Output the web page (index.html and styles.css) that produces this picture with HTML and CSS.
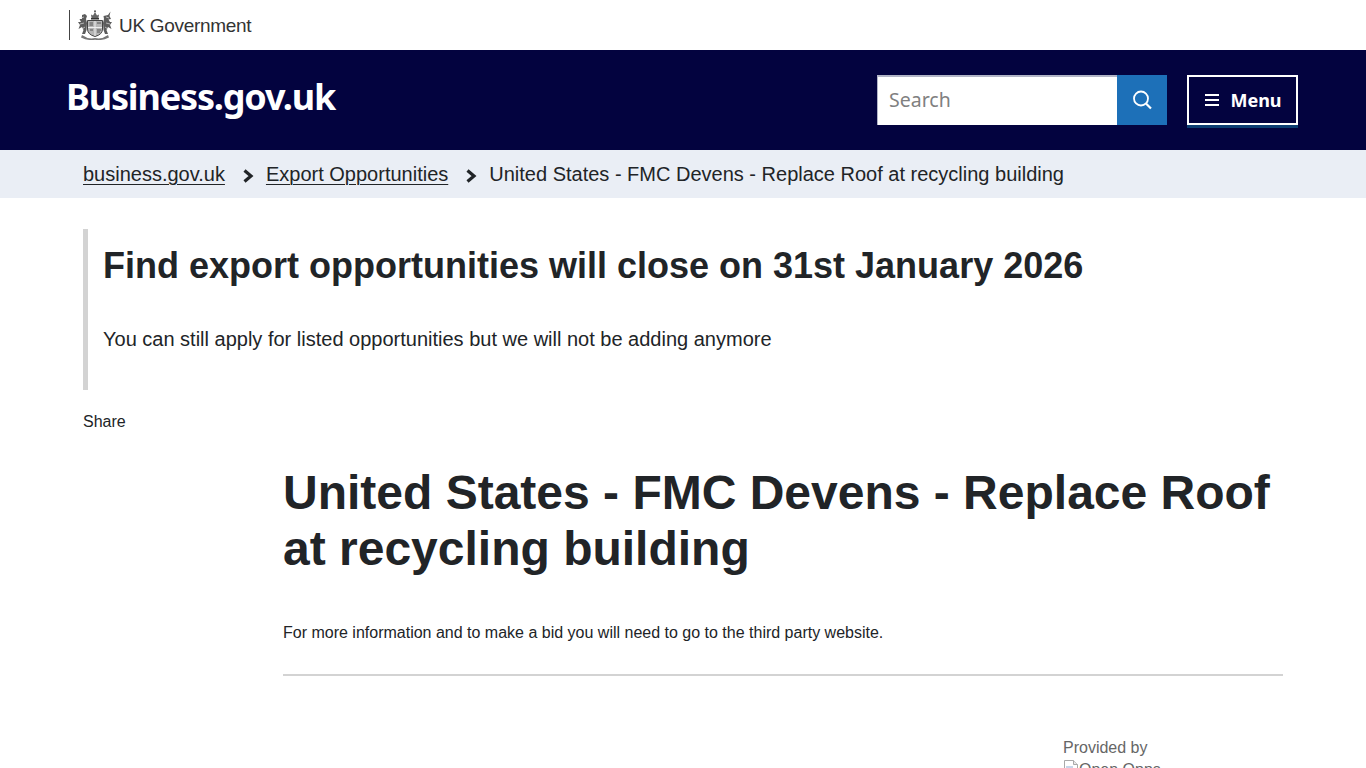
FILE: index.html
```html
<!DOCTYPE html>
<html lang="en">
<head>
    <meta charset="UTF-8">
    <meta name="viewport" content="width=device-width, initial-scale=1.0">
    <title>United States - FMC Devens - Replace Roof at recycling building</title>
    <link rel="stylesheet" href="styles.css">
</head>
<body>
    <div class="gov-bar">
        <div class="gov-logo">
            <svg class="crest" width="36" height="30" viewBox="0 0 36 30" aria-hidden="true">
                <!-- crown -->
                <path d="M14.5 8 L14 4.5 L16 5.5 L18 2 L20 5.5 L22 4.5 L21.5 8 Z" fill="#666"/>
                <circle cx="18" cy="1.2" r="1" fill="#555"/>
                <rect x="14" y="8" width="8" height="1.5" fill="#333"/>
                <!-- shield -->
                <path d="M10.5 10.5 H25.5 V19 Q25.5 24.5 18 26.5 Q10.5 24.5 10.5 19 Z" fill="#b5b5b5" stroke="#444" stroke-width="1"/>
                <path d="M18 11 V26 M11 17.5 H25" stroke="#eee" stroke-width="1"/>
                <path d="M12.5 13 H16 M20 13 H24 M12.5 15 H16 M20 20 H24 M13 20 H16 M20 22 H23" stroke="#555" stroke-width="1"/>
                <!-- lion -->
                <path d="M5 5 L8 4 L10 6 L9 9 L10 13 L9.5 20 L8 24 L5 24 L6.5 20 L5 17 L1.5 19 L3 15 L1 12 L4 12 L2.5 9 L5 9 Z" fill="#5c5c5c"/>
                <path d="M4 8 L7 7 M3 14 L7 13 M5 19 L8 17" stroke="#ddd" stroke-width=".7"/>
                <!-- unicorn -->
                <path d="M31 5 L33.5 1.5 L32.5 6 L34 9 L31.5 9.5 L33 12 L35 12 L33 15 L34.5 19 L31 17 L29.5 20 L31 24 L28 24 L26.5 20 L26 13 L27 9 L26.5 6 Z" fill="#5c5c5c"/>
                <path d="M32 8 L29 7 M33 14 L29 13 M31 19 L28 17" stroke="#ddd" stroke-width=".7"/>
                <!-- motto -->
                <path d="M5 25 Q11 29.5 18 28 Q25 29.5 31 25 L32 27.5 Q25 31 18 29.8 Q11 31 4 27.5 Z" fill="#777"/>
            </svg>
            <span class="gov-name">UK Government</span>
        </div>
    </div>

    <header class="site-header">
        <div class="site-header-inner">
            <a class="site-name" href="#">Business.gov.uk</a>
            <div class="header-actions">
                <form class="search">
                    <input type="text" placeholder="Search" aria-label="Search">
                    <button type="button" class="search-button" aria-label="Search">
                        <svg width="22" height="22" viewBox="0 0 22 22" fill="none" stroke="#fff" aria-hidden="true">
                            <circle cx="10" cy="9.5" r="7" stroke-width="1.8"/>
                            <path d="M15 14.5 L20 19.5" stroke-width="2.2"/>
                        </svg>
                    </button>
                </form>
                <button type="button" class="menu-button">
                    <svg width="14" height="12" viewBox="0 0 14 12" fill="none" stroke="#fff" stroke-width="1.8" aria-hidden="true">
                        <path d="M0 1 H14 M0 6 H14 M0 11 H14"/>
                    </svg>
                    Menu
                </button>
            </div>
        </div>
    </header>

    <nav class="breadcrumbs">
        <div class="container breadcrumbs-inner">
            <a href="#">business.gov.uk</a>
            <svg class="chevron" width="11" height="14" viewBox="0 0 11 14" fill="none" stroke="#212427" stroke-width="3.2" aria-hidden="true"><path d="M1.5 1.5 L8 7 L1.5 12.5"/></svg>
            <a href="#">Export Opportunities</a>
            <svg class="chevron" width="11" height="14" viewBox="0 0 11 14" fill="none" stroke="#212427" stroke-width="3.2" aria-hidden="true"><path d="M1.5 1.5 L8 7 L1.5 12.5"/></svg>
            <span>United States - FMC Devens - Replace Roof at recycling building</span>
        </div>
    </nav>

    <main class="container">
        <div class="notice">
            <h2>Find export opportunities will close on 31st January 2026</h2>
            <p>You can still apply for listed opportunities but we will not be adding anymore</p>
        </div>

        <p class="share">Share</p>

        <div class="opportunity">
            <h1>United States - FMC Devens - Replace Roof at recycling building</h1>
            <p class="intro">For more information and to make a bid you will need to go to the third party website.</p>
            <hr>
            <div class="provider">
                <div class="provider-box">
                    <p>Provided by</p>
                    <div class="broken-img">
                        <svg width="16" height="16" viewBox="0 0 16 16" aria-hidden="true">
                            <path d="M1.5 .5 H10.5 L14.5 4.5 V15.5 H1.5 Z" fill="#fff" stroke="#a9a9a9"/>
                            <path d="M10.5 .5 V4.5 H14.5" fill="#e8e8e8" stroke="#a9a9a9"/>
                            <rect x="3" y="6" width="7" height="6" fill="#c7d6ea"/>
                        </svg>
                        <span>Open Opps</span>
                    </div>
                </div>
            </div>
        </div>
    </main>
</body>
</html>
```

FILE: styles.css
```css
body {
    font-family: "Liberation Sans", Arial, sans-serif;
    margin: 0;
    padding: 0;
    background-color: #fff;
    color: #212427;
}

a {
    color: inherit;
}

.container {
    width: 1200px;
    margin: 0 auto;
}

.gov-bar {
    height: 50px;
    width: 1230px;
    margin: 0 auto;
    display: flex;
    align-items: center;
}

.gov-logo {
    display: flex;
    align-items: center;
    height: 30px;
    margin-left: 1px;
    padding-left: 7px;
    border-left: 1px solid #444;
}

.crest {
    margin-right: 6px;
}

.gov-name {
    font-size: 19px;
    letter-spacing: -0.3px;
    padding-top: 2px;
    color: #333;
}

.site-header {
    height: 100px;
    background-color: #03033f;
}

.site-header-inner {
    width: 1231px;
    height: 100%;
    margin-left: 67px;
    display: flex;
    align-items: center;
    justify-content: space-between;
}

.site-name {
    font-family: "Noto Sans", sans-serif;
    font-size: 36px;
    font-weight: 700;
    letter-spacing: -1.18px;
    margin-left: -1px;
    padding-bottom: 8px;
    color: #fff;
    text-decoration: none;
}

.header-actions {
    display: flex;
    align-items: center;
    gap: 20px;
}

.search {
    display: flex;
    height: 50px;
}

.search input {
    width: 240px;
    box-sizing: border-box;
    border: 0;
    border-top: 2px solid #b1b4c6;
    border-left: 1px solid #b1b4c6;
    padding: 0 11px 3px;
    font-family: "Noto Sans", sans-serif;
    font-size: 19.5px;
    background: #fff;
}

.search input::placeholder {
    color: #808080;
}

.search-button {
    width: 50px;
    border: 0;
    padding: 0;
    background-color: #1d70b8;
    display: flex;
    align-items: center;
    justify-content: center;
}

.menu-button {
    width: 111px;
    height: 50px;
    box-sizing: border-box;
    border: 2px solid #fff;
    box-shadow: 0 3px 0 #0b3d72;
    padding: 0 0 0 2px;
    background-color: #03033f;
    color: #fff;
    font-family: "Noto Sans", sans-serif;
    font-size: 18px;
    font-weight: 700;
    display: flex;
    align-items: center;
    justify-content: center;
    gap: 11px;
}

.breadcrumbs {
    height: 48px;
    background-color: #eaeef5;
}

.breadcrumbs-inner {
    height: 100%;
    display: flex;
    align-items: center;
    font-size: 20px;
}

.breadcrumbs a {
    text-decoration-thickness: 1px;
    text-underline-offset: 3px;
}

.chevron {
    margin: 3px 12px 0 18px;
}

.notice {
    margin-top: 31px;
    height: 161px;
    box-sizing: border-box;
    border-left: 5px solid #d3d3d3;
    padding-left: 15px;
}

.notice h2 {
    margin: 0;
    padding-top: 16px;
    font-size: 36px;
    line-height: 42px;
}

.notice p {
    margin: 40px 0 0;
    font-size: 20px;
    line-height: 25px;
}

.share {
    margin: 22px 0 0;
    font-size: 16px;
    line-height: 20px;
}

.opportunity {
    margin-left: 200px;
}

.opportunity h1 {
    margin: 33px 0 0;
    font-size: 48px;
    line-height: 56px;
}

.intro {
    margin: 46px 0 0;
    font-size: 16px;
    line-height: 20px;
}

.opportunity hr {
    margin: 31px 0 0;
    border: 0;
    border-top: 2px solid #d3d3d3;
}

.provider {
    display: flex;
    justify-content: flex-end;
}

.provider-box {
    width: 220px;
    margin-top: 62px;
    color: #666;
    font-size: 16px;
}

.provider-box p {
    margin: 0;
    line-height: 20px;
}

.broken-img {
    display: flex;
    line-height: 20px;
    margin-top: 2px;
}
```
